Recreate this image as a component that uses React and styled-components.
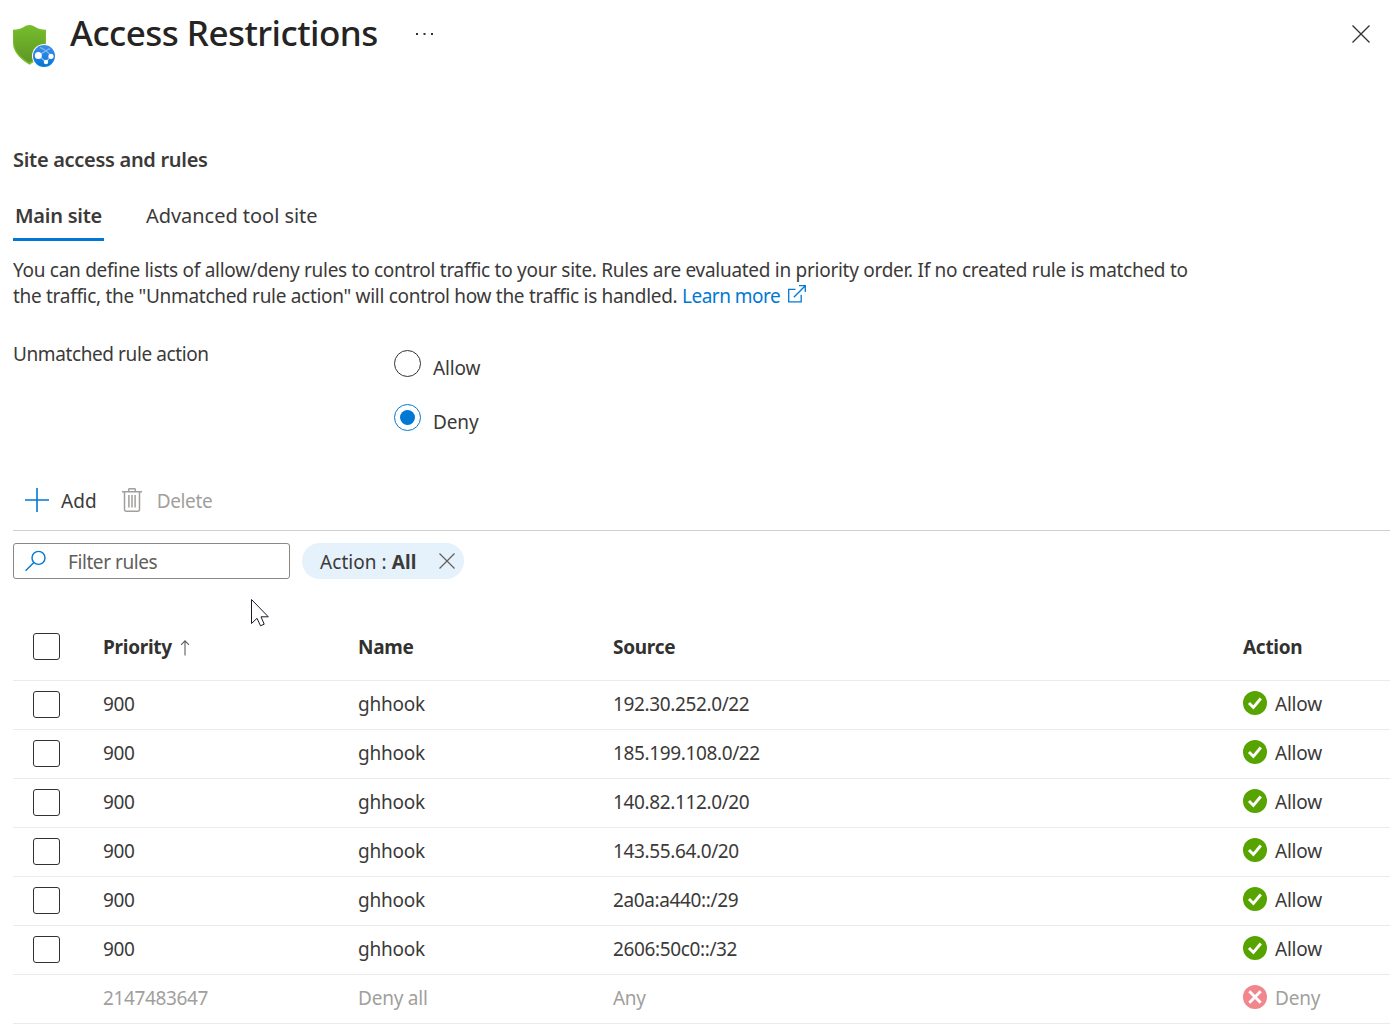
import React from "react";
import styled, { createGlobalStyle, css } from "styled-components";

const GlobalStyle = createGlobalStyle`
  *, *::before, *::after { box-sizing: border-box; }
  body {
    margin: 0;
    background: #fff;
    color: #3b3a39;
    font-family: "Noto Sans", "Open Sans", sans-serif;
    font-size: 19px;
    overflow: hidden;
  }
  h1, h2, p { margin: 0; }
  button { font: inherit; color: inherit; background: none; border: 0; padding: 0; letter-spacing: inherit; }
  svg { display: block; flex: none; }
`;

const Blade = styled.main`
  position: relative;
  height: 1033px;
  padding-left: 13px;
  overflow: hidden;
`;

const BladeHeader = styled.header`
  display: flex;
  align-items: flex-start;
  height: 144px;
`;

const ResourceIcon = styled.div`
  padding-top: 24px;
  width: 57px;
`;

const Title = styled.h1`
  width: 308px;
  font-size: 35px;
  line-height: 65px;
  font-weight: 500;
  letter-spacing: -0.53px;
  color: #252423;
  white-space: nowrap;
`;

const MoreButton = styled.button`
  display: flex;
  padding: 33px 0 0 37px;
`;

const CloseButton = styled.button`
  display: flex;
  margin: 25px 20px 0 auto;
`;

const SectionTitle = styled.h2`
  font-size: 20px;
  line-height: 32px;
  font-weight: 600;
  letter-spacing: -0.3px;
`;

const TabList = styled.div`
  display: flex;
  gap: 40px;
  margin-top: 18px;
  height: 47px;
`;

const Tab = styled.button`
  display: flex;
  justify-content: center;
  padding: 0 2px;
  height: 47px;
  font-size: 20px;
  line-height: 43px;
  white-space: nowrap;
  ${(p) => p.$active
    ? css`width: 91px; font-weight: 600; letter-spacing: -0.24px; border-bottom: 3px solid #0078d4;`
    : css`letter-spacing: -0.04px;`}
`;

const Description = styled.p`
  margin-top: 16px;
  line-height: 26px;
  letter-spacing: -0.28px;
  white-space: nowrap;
`;

const SecondLine = styled.span`
  letter-spacing: -0.3px;
`;

const LearnMore = styled.a`
  display: inline-flex;
  gap: 8px;
  color: #0078d4;
  letter-spacing: -0.52px;
`;

const LinkIcon = styled.span`
  padding-top: 2px;
`;

const RuleAction = styled.section`
  display: grid;
  grid-template-columns: 381px 1fr;
  margin-top: 32px;
  height: 147px;
`;

const FieldLabel = styled.span`
  line-height: 26px;
  letter-spacing: -0.4px;
`;

const RadioGroup = styled.div`
  display: flex;
  flex-direction: column;
  gap: 26px;
  padding-top: 9px;
`;

const RadioOption = styled.label`
  display: flex;
  gap: 12px;
  height: 28px;
  line-height: 36px;
  letter-spacing: -0.15px;
`;

const RadioMark = styled.span`
  display: grid;
  place-items: center;
  width: 27px;
  height: 27px;
  border: 1px solid ${(p) => (p.$checked ? "#0078d4" : "#323130")};
  border-radius: 50%;

  &::after {
    content: "";
    width: 15px;
    height: 15px;
    border-radius: 50%;
    background: ${(p) => (p.$checked ? "#0078d4" : "transparent")};
  }
`;

const Toolbar = styled.div`
  display: flex;
  align-items: flex-start;
  height: 43px;
  padding-left: 12px;
  border-bottom: 1px solid #d2d0ce;
`;

const Command = styled.button`
  display: flex;
  align-items: flex-start;
  gap: ${(p) => p.$gap}px;
  margin-right: 25px;
  line-height: 26px;
  letter-spacing: ${(p) => (p.$disabled ? "-0.35px" : "0.05px")};
  color: ${(p) => (p.$disabled ? "#a19f9d" : "#3b3a39")};
`;

const Filters = styled.div`
  display: flex;
  gap: 12px;
  padding-top: 12px;
  height: 81px;
`;

const SearchBox = styled.div`
  display: flex;
  align-items: center;
  gap: 21px;
  width: 277px;
  height: 36px;
  padding: 0 0 0 11px;
  border: 1px solid #8a8886;
  border-radius: 3px;
  letter-spacing: -0.42px;
  color: #605e5c;
`;

const SearchText = styled.span`
  padding-top: 2px;
`;

const FilterPill = styled.button`
  display: flex;
  align-items: center;
  width: 162px;
  height: 36px;
  padding: 0 9px 0 18px;
  border-radius: 18px;
  background: #e5f1fb;
`;

const PillText = styled.span`
  padding-top: 2px;
  letter-spacing: 0.06px;
  white-space: pre;
`;

const PillClose = styled.span`
  margin-left: auto;
`;

const Grid = styled.div`
  display: flex;
  flex-direction: column;
`;

const Row = styled.div`
  display: grid;
  grid-template-columns: 90px 255px 255px 630px 1fr;
  align-items: center;
  height: ${(p) => (p.$head ? 69 : 49)}px;
  padding-top: ${(p) => (p.$head ? 4 : 0)}px;
  border-bottom: 1px solid #edebe9;
  font-weight: ${(p) => (p.$head ? 700 : 400)};
  letter-spacing: ${(p) => (p.$head ? "-0.28px" : "-0.22px")};
  color: ${(p) => (p.$muted ? "#a19f9d" : p.$head ? "#323130" : "#3b3a39")};
`;

const Cell = styled.div`
  display: flex;
  align-items: center;
  gap: 8px;
  line-height: 26px;
  margin-top: -2px;
  letter-spacing: ${(p) => (p.$numeric ? "-0.37px" : "inherit")};
`;

const StatusMark = styled.span`
  padding-bottom: 2px;
`;

const SortMark = styled.span`
  padding-top: 2px;
`;

const CheckCell = styled.div`
  padding: ${(p) => (p.$head ? "0 0 3px 20px" : "0 0 2px 20px")};
`;

const Checkbox = styled.span`
  display: block;
  width: 27px;
  height: 27px;
  border: 1px solid #323130;
  border-radius: 3px;
`;

const Cursor = styled.div`
  position: absolute;
  left: 250px;
  top: 598px;
`;

const ShieldIcon = () => (
  <svg width="44" height="44" viewBox="0 0 44 44">
    <defs>
      <linearGradient id="shield" x1="0" y1="0" x2="0" y2="1">
        <stop offset="0" stopColor="#76bc2d" />
        <stop offset="1" stopColor="#5e9624" />
      </linearGradient>
      <linearGradient id="globe" x1="0" y1="0" x2="0" y2="1">
        <stop offset="0" stopColor="#3b8fe6" />
        <stop offset="0.4" stopColor="#2b83e2" />
        <stop offset="1" stopColor="#0078d4" />
      </linearGradient>
    </defs>
    <path d="M16.5 1C22 1 23 5.8 33 5.8V19C33 30 22 37.5 16.5 40.7C11 37.5 0 30 0 19V5.8C10 5.8 11 1 16.5 1Z" fill="#76bc2d" />
    <path d="M16.5 2.3C21.5 2.3 23 6.9 31.7 7V19C31.7 28.5 22 35.5 16.5 38.5C11 35.5 1.3 28.5 1.3 19V7C10 6.9 11.5 2.3 16.5 2.3Z" fill="url(#shield)" />
    <circle cx="31" cy="32" r="12" fill="#fff" />
    <circle cx="31" cy="32" r="11" fill="url(#globe)" />
    <path d="M26 31L37 24.5M27 23.5C31 25 35 28 38 32M26 32L33 38L38 32" fill="none" stroke="#83bbf1" strokeWidth="1.3" />
    <circle cx="25.3" cy="31.5" r="3.5" fill="#fff" />
    <circle cx="38" cy="32.3" r="2.6" fill="#fff" />
    <circle cx="33" cy="38" r="2.2" fill="#fff" />
  </svg>
);

const CrossIcon = ({ size, color = "#323130", width = 1.3 }) => (
  <svg width={size} height={size} viewBox={`0 0 ${size} ${size}`}>
    <path d={`M.5 .5L${size - 0.5} ${size - 0.5}M${size - 0.5} .5L.5 ${size - 0.5}`} stroke={color} strokeWidth={width} />
  </svg>
);

const PlusIcon = () => (
  <svg width="24" height="24" viewBox="0 0 24 24">
    <path d="M12 0V24M0 12H24" stroke="#0078d4" strokeWidth="1.6" />
  </svg>
);

const TrashIcon = () => (
  <svg width="20" height="24" viewBox="0 0 20 24" fill="none" stroke="#a19f9d" strokeWidth="1.5">
    <path d="M0 3.7H20M6.7 3.5V1.7Q6.7 .7 7.7 .7H12.3Q13.3 .7 13.3 1.7V3.5M2.5 4V21.8Q2.5 23.2 4 23.2H16Q17.5 23.2 17.5 21.8V4M6.9 7V19.5M10 7V19.5M13.1 7V19.5" />
  </svg>
);

const SearchIcon = () => (
  <svg width="22" height="22" viewBox="0 0 22 22" fill="none" stroke="#0078d4" strokeWidth="1.4">
    <circle cx="13.5" cy="7.9" r="6.5" />
    <path d="M8.9 12.5L.6 20.8" />
  </svg>
);

const ExternalIcon = () => (
  <svg width="18" height="18" viewBox="0 0 18 18" fill="none" stroke="#0078d4" strokeWidth="1.3">
    <path d="M7.5 4.4H.7V16.8H13.2V9.8M11 .7H17.3V7M17.3 .7L5.8 12.2" />
  </svg>
);

const SortIcon = () => (
  <svg width="10" height="16" viewBox="0 0 10 16" fill="none" stroke="#605e5c" strokeWidth="1.1">
    <path d="M5 .8V15.5M1 4.8L5 .8L9 4.8" />
  </svg>
);

const StatusIcon = ({ allowed }) => (
  <svg width="24" height="24" viewBox="0 0 24 24" fill="none" stroke="#fff" strokeWidth="2.9">
    <circle cx="12" cy="12" r="12" fill={allowed ? "#57a300" : "#f1868d"} stroke="none" />
    <path d={allowed ? "M6 11.9L10.4 16.4L17.8 7.5" : "M6.3 6.3L17.7 17.7M17.7 6.3L6.3 17.7"} />
  </svg>
);

const rules = [
  ["900", "ghhook", "192.30.252.0/22", "Allow"],
  ["900", "ghhook", "185.199.108.0/22", "Allow"],
  ["900", "ghhook", "140.82.112.0/20", "Allow"],
  ["900", "ghhook", "143.55.64.0/20", "Allow"],
  ["900", "ghhook", "2a0a:a440::/29", "Allow"],
  ["900", "ghhook", "2606:50c0::/32", "Allow"],
  ["2147483647", "Deny all", "Any", "Deny"],
];

export default function App() {
  return (
    <Blade>
      <GlobalStyle />
      <BladeHeader>
        <ResourceIcon><ShieldIcon /></ResourceIcon>
        <Title>Access Restrictions</Title>
        <MoreButton aria-label="More">
          <svg width="18" height="2" viewBox="0 0 18 2" fill="#323130">
            <path d="M1 0h2v2H1zM8.5 0h2v2h-2zM16 0h2v2h-2z" />
          </svg>
        </MoreButton>
        <CloseButton aria-label="Close"><CrossIcon size={18} /></CloseButton>
      </BladeHeader>

      <SectionTitle>Site access and rules</SectionTitle>
      <TabList>
        <Tab $active>Main site</Tab>
        <Tab>Advanced tool site</Tab>
      </TabList>
      <Description>
        You can define lists of allow/deny rules to control traffic to your site. Rules are evaluated in priority order. If no created rule is matched to
        <br />
        <SecondLine>the traffic, the "Unmatched rule action" will control how the traffic is handled. </SecondLine>
        <LearnMore>Learn more<LinkIcon><ExternalIcon /></LinkIcon></LearnMore>
      </Description>

      <RuleAction>
        <FieldLabel>Unmatched rule action</FieldLabel>
        <RadioGroup>
          <RadioOption><RadioMark />Allow</RadioOption>
          <RadioOption><RadioMark $checked />Deny</RadioOption>
        </RadioGroup>
      </RuleAction>

      <Toolbar>
        <Command $gap={12}><PlusIcon />Add</Command>
        <Command $gap={15} $disabled><TrashIcon />Delete</Command>
      </Toolbar>

      <Filters>
        <SearchBox><SearchIcon /><SearchText>Filter rules</SearchText></SearchBox>
        <FilterPill>
          <PillText>Action : <b>All</b></PillText>
          <PillClose><CrossIcon size={16} color="#605e5c" width={1.2} /></PillClose>
        </FilterPill>
      </Filters>

      <Grid>
        <Row $head>
          <CheckCell $head><Checkbox /></CheckCell>
          <Cell>Priority<SortMark><SortIcon /></SortMark></Cell>
          <Cell>Name</Cell>
          <Cell>Source</Cell>
          <Cell>Action</Cell>
        </Row>
        {rules.map(([priority, name, source, action], i) => {
          const muted = action === "Deny";
          return (
            <Row key={i} $muted={muted}>
              <CheckCell>{!muted && <Checkbox />}</CheckCell>
              <Cell $numeric>{priority}</Cell>
              <Cell>{name}</Cell>
              <Cell $numeric>{source}</Cell>
              <Cell><StatusMark><StatusIcon allowed={!muted} /></StatusMark>{action}</Cell>
            </Row>
          );
        })}
      </Grid>

      <Cursor>
        <svg width="20" height="30" viewBox="0 0 20 30">
          <path d="M1.5 1.5V25.5L7 20.3L10.5 27.8L14.2 26.2L11 18.8H18.3Z" fill="#fff" stroke="#1b1a2b" strokeWidth="1" />
        </svg>
      </Cursor>
    </Blade>
  );
}
